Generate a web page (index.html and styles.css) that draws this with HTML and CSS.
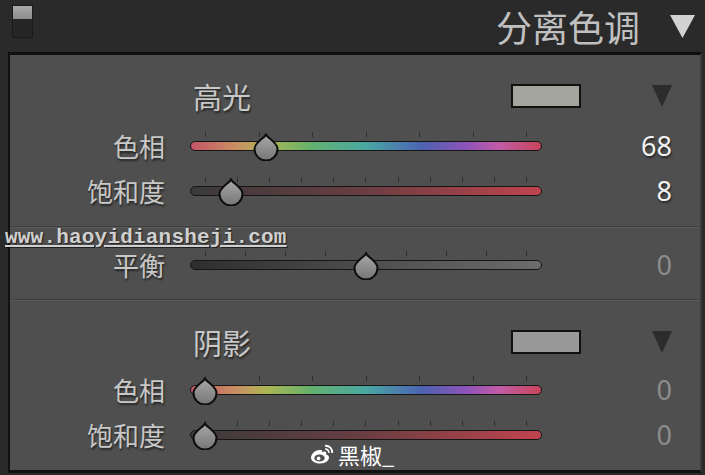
FILE: index.html
```html
<!DOCTYPE html>
<html lang="zh-CN">
<head>
  <meta charset="UTF-8" />
  <title>分离色调</title>
  <link rel="stylesheet" href="styles.css">
</head>
<body>

<svg class="defs" width="0" height="0">
  <defs>
    <linearGradient id="thumbFill" x1="0" y1="0" x2="0" y2="1">
      <stop offset="0" stop-color="#a8a8a8"/>
      <stop offset="1" stop-color="#767676"/>
    </linearGradient>
  </defs>
</svg>

<div class="topbar">
  <div class="toggle"><span class="toggle-on"></span></div>
  <div class="title">分离色调</div>
  <svg class="collapse" viewBox="0 0 25 23"><polygon points="0,0 25,0 12.5,23" fill="#d2d2d2"/></svg>
</div>

<div class="panel">

  <!-- 高光 -->
  <section class="group group-hi">
    <div class="group-head">
      <span class="group-name">高光</span>
      <span class="swatch swatch-hi"></span>
      <svg class="menu-arrow" viewBox="0 0 20 22"><polygon points="0,0 20,0 10,22" fill="#2c2c2c"/></svg>
    </div>
    <div class="row">
      <span class="label">色相</span>
      <div class="slider">
        <div class="ticks"><i></i><i></i><i></i><i></i><i></i><i></i><i></i></div>
        <div class="track track-hue"></div>
        <div class="thumb-lane">
          <svg class="thumb" style="left: 18.89%" viewBox="0 0 28 28"><path d="M14 1.5 C15.5 5 25.5 9.5 25.5 16 A11.5 11.5 0 0 1 2.5 16 C2.5 9.5 12.5 5 14 1.5 Z"/></svg>
        </div>
      </div>
      <span class="value">68</span>
    </div>
    <div class="row">
      <span class="label">饱和度</span>
      <div class="slider">
        <div class="ticks"><i></i><i></i><i></i><i></i><i></i><i></i><i></i><i></i><i></i><i></i><i></i></div>
        <div class="track track-sat"></div>
        <div class="thumb-lane">
          <svg class="thumb" style="left: 8%" viewBox="0 0 28 28"><path d="M14 1.5 C15.5 5 25.5 9.5 25.5 16 A11.5 11.5 0 0 1 2.5 16 C2.5 9.5 12.5 5 14 1.5 Z"/></svg>
        </div>
      </div>
      <span class="value">8</span>
    </div>
  </section>

  <!-- 平衡 -->
  <section class="group group-balance">
    <div class="row">
      <span class="label">平衡</span>
      <div class="slider">
        <div class="ticks"><i></i><i></i><i></i><i></i><i></i><i></i><i></i><i></i><i></i></div>
        <div class="track track-balance"></div>
        <div class="thumb-lane">
          <svg class="thumb" style="left: 50%" viewBox="0 0 28 28"><path d="M14 1.5 C15.5 5 25.5 9.5 25.5 16 A11.5 11.5 0 0 1 2.5 16 C2.5 9.5 12.5 5 14 1.5 Z"/></svg>
        </div>
      </div>
      <span class="value muted">0</span>
    </div>
  </section>

  <!-- 阴影 -->
  <section class="group group-shadow">
    <div class="group-head">
      <span class="group-name">阴影</span>
      <span class="swatch swatch-shadow"></span>
      <svg class="menu-arrow" viewBox="0 0 20 22"><polygon points="0,0 20,0 10,22" fill="#2c2c2c"/></svg>
    </div>
    <div class="row">
      <span class="label">色相</span>
      <div class="slider">
        <div class="ticks"><i></i><i></i><i></i><i></i><i></i><i></i><i></i></div>
        <div class="track track-hue"></div>
        <div class="thumb-lane">
          <svg class="thumb" style="left: 0%" viewBox="0 0 28 28"><path d="M14 1.5 C15.5 5 25.5 9.5 25.5 16 A11.5 11.5 0 0 1 2.5 16 C2.5 9.5 12.5 5 14 1.5 Z"/></svg>
        </div>
      </div>
      <span class="value muted">0</span>
    </div>
    <div class="row">
      <span class="label">饱和度</span>
      <div class="slider">
        <div class="ticks"><i></i><i></i><i></i><i></i><i></i><i></i><i></i><i></i><i></i><i></i><i></i></div>
        <div class="track track-sat"></div>
        <div class="thumb-lane">
          <svg class="thumb" style="left: 0%" viewBox="0 0 28 28"><path d="M14 1.5 C15.5 5 25.5 9.5 25.5 16 A11.5 11.5 0 0 1 2.5 16 C2.5 9.5 12.5 5 14 1.5 Z"/></svg>
        </div>
      </div>
      <span class="value muted">0</span>
    </div>
  </section>

  <div class="site-mark">www.haoyidiansheji.com</div>

  <div class="weibo-mark">
    <svg class="weibo-logo" viewBox="0 0 24 20">
      <path d="M10 6 C4 6 1 11 1 13.5 C1 17 5 19.5 10 19.5 C16 19.5 19 16 19 13.5 C19 11.5 17 11 16 10.6 C17 8 15.5 6.5 12 8 C12.5 6 11.5 6 10 6 Z" fill="#fff"/>
      <ellipse cx="9.5" cy="14" rx="5.2" ry="3.6" fill="#4e4e4e"/>
      <circle cx="8.6" cy="14.4" r="1.9" fill="#fff"/>
      <path d="M15 1.8 A6.5 6.5 0 0 1 22.2 9" stroke="#fff" stroke-width="1.8" fill="none"/>
      <path d="M15.2 5.2 A3.2 3.2 0 0 1 18.8 8.8" stroke="#fff" stroke-width="1.6" fill="none"/>
    </svg>
    <span>黑椒_</span>
  </div>

</div>

</body>
</html>
```

FILE: styles.css
```css
body {
  margin: 0;
  width: 705px;
  height: 475px;
  overflow: hidden;
  background: #2a2a2a;
  font-family: "Noto Sans CJK SC", "Noto Sans", sans-serif;
}

.defs {
  position: absolute;
}

.topbar {
  height: 52px;
  display: flex;
  align-items: center;
  padding: 0 10px 0 12px;
  box-sizing: border-box;
}

.toggle {
  align-self: flex-start;
  margin-top: 5px;
  width: 21px;
  height: 33px;
  background: #252525;
  border: 1px solid #1a1a1a;
  box-sizing: border-box;
}

.toggle-on {
  display: block;
  height: 13px;
  background: linear-gradient(#aaaaaa, #8c8c8c);
}

.title {
  margin-left: auto;
  font-size: 36px;
  line-height: 1;
  color: #c0c0c0;
}

.collapse {
  width: 25px;
  height: 23px;
  margin-left: 30px;
}

.panel {
  position: relative;
  margin-left: 8px;
  width: 694px;
  box-sizing: border-box;
  background: #4f4f4f;
  border-top: 3px solid #0f0f0f;
  border-left: 2px solid #111;
  border-right: 2px solid #3c3c3c;
  border-bottom: 3px solid #111;
}

.group {
  border-bottom: 1px solid #3f3f3f;
  box-shadow: 0 1px 0 #5a5a5a;
}

.group-hi {
  padding: 18px 0 13px;
}

.group-balance {
  padding: 15px 0 12px;
}

.group-shadow {
  padding: 19px 0 13px;
  border-bottom: none;
  box-shadow: none;
}

.group-head {
  display: flex;
  align-items: center;
  height: 46px;
  padding: 0 28px 0 183px;
  margin-bottom: 4px;
}

.group-shadow .group-head {
  margin-bottom: 2px;
}

.group-name {
  width: 318px;
  font-size: 29px;
  line-height: 1;
  color: #c8c8c8;
  text-shadow: 1px 2px 2px rgba(0,0,0,0.55);
}

.swatch {
  width: 70px;
  height: 24px;
  border: 2px solid #111;
  box-sizing: border-box;
}

.swatch-hi {
  background: #a4a59c;
}

.swatch-shadow {
  background: #999999;
}

.menu-arrow {
  margin-left: auto;
  width: 20px;
  height: 22px;
}

.row {
  display: grid;
  grid-template-columns: 155px 352px 105px;
  column-gap: 25px;
  height: 45px;
  align-items: center;
}

.label {
  text-align: right;
  font-size: 26px;
  line-height: 1;
  color: #c8c8c8;
  text-shadow: 1px 2px 2px rgba(0,0,0,0.55);
}

.slider {
  position: relative;
  height: 30px;
}

.ticks {
  display: flex;
  justify-content: space-between;
  padding: 0 15px;
  height: 5px;
  margin: 1px 0 4px;
}

.ticks i {
  width: 1px;
  background: #2f2f2f;
}

.track {
  height: 10px;
  border: 1px solid #151515;
  border-radius: 5px;
  box-sizing: border-box;
}

.track-hue {
  background: linear-gradient(90deg, #c65466 0%, #c89462 14%, #aab652 22%, #62b070 35%, #4aa8a4 50%, #4c62b2 66%, #8a54b8 78%, #c05ca8 88%, #c8445a 100%);
}

.track-sat {
  background: linear-gradient(90deg, #3a3a3a 0%, #6a3e42 50%, #c0444e 100%);
}

.track-balance {
  background: linear-gradient(90deg, #2e2e2e, #6c6c6c);
}

.thumb-lane {
  position: absolute;
  top: 2px;
  left: 15px;
  right: 15px;
  height: 28px;
}

.thumb {
  position: absolute;
  top: 0;
  width: 28px;
  height: 28px;
  margin-left: -14px;
}

.thumb path {
  fill: url(#thumbFill);
  stroke: #0d0d0d;
  stroke-width: 2;
}

.value {
  text-align: right;
  font-family: "Noto Sans", sans-serif;
  font-size: 27px;
  line-height: 1;
  color: #f2f2f2;
  text-shadow: 1px 2px 2px rgba(0,0,0,0.5);
}

.value.muted {
  color: #8c8c8c;
  text-shadow: none;
}

.site-mark {
  position: absolute;
  top: 172px;
  left: -5px;
  font-family: "Liberation Mono", monospace;
  font-weight: bold;
  font-size: 21px;
  line-height: 22px;
  letter-spacing: 0.2px;
  color: #d0d0d0;
  text-decoration: underline;
  text-shadow: 1px 1px 1px rgba(0,0,0,0.6);
}

.weibo-mark {
  position: absolute;
  top: 388px;
  left: 300px;
  display: flex;
  align-items: center;
  gap: 4px;
  font-size: 22px;
  line-height: 1;
  color: #ffffff;
}

.weibo-logo {
  width: 24px;
  height: 20px;
}
```
